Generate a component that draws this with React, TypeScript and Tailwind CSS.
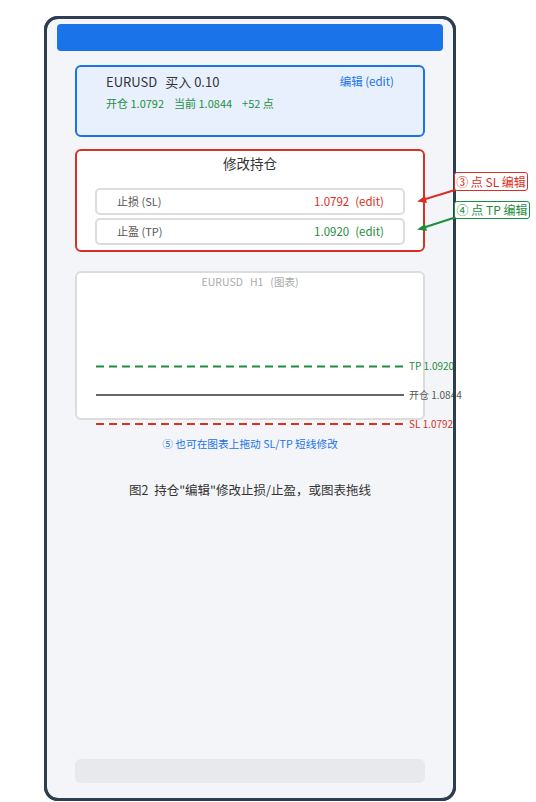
import React from "react";

const font = { fontFamily: '"Noto Sans CJK SC", "Noto Sans", sans-serif' };

export default function App() {
  return (
    <div className="relative w-[536px] h-[802px] bg-white overflow-hidden" style={font}>
      {/* phone frame */}
      <div className="relative ml-[44px] mt-[16px] w-[412px] h-[785px] rounded-[14px] border-[3px] border-[#2c3e50] bg-[#f4f5f9] flex flex-col">
        {/* top bar */}
        <div className="mx-[10px] mt-[5px] h-[27px] rounded-[4px] bg-[#1a73e8]" />

        {/* position card */}
        <div className="mx-[28px] mt-[14px] h-[72px] rounded-[6px] border-2 border-[#1a73e8] bg-[#e8f0fe] pl-[29px] pr-[29px] pt-[4px]">
          <div className="flex items-center justify-between h-[22px]">
            <div className="flex gap-[8px] text-[13px] text-[#333]">
              <span>EURUSD</span>
              <span>买入 0.10</span>
            </div>
            <span className="text-[11.5px] text-[#1a73e8]">编辑 (edit)</span>
          </div>
          <div className="flex gap-[10px] mt-[2px] text-[11px] text-[#1e8e3e]">
            <span>开仓 1.0792</span>
            <span>当前 1.0844</span>
            <span>+52 点</span>
          </div>
        </div>

        {/* modify card */}
        <div className="mx-[28px] mt-[12px] h-[103px] rounded-[6px] border-2 border-[#d93025] bg-white px-[18px]">
          <div className="text-center text-[13.5px] text-[#333] h-[24px] leading-[24px]">修改持仓</div>
          <div className="mt-[13px] flex flex-col gap-[3px]">
            <div className="h-[27px] rounded-[5px] border-2 border-[#dddddd] flex items-center justify-between pl-[20px] pr-[19px]">
              <span className="text-[11px] text-[#555]">止损 (SL)</span>
              <span className="flex gap-[6px] text-[11.5px] text-[#d93025]"><span>1.0792</span><span>(edit)</span></span>
            </div>
            <div className="h-[27px] rounded-[5px] border-2 border-[#dddddd] flex items-center justify-between pl-[20px] pr-[19px]">
              <span className="text-[11px] text-[#555]">止盈 (TP)</span>
              <span className="flex gap-[6px] text-[11.5px] text-[#1e8e3e]"><span>1.0920</span><span>(edit)</span></span>
            </div>
          </div>
        </div>

        {/* chart card */}
        <div className="mx-[28px] mt-[19px] h-[149px] rounded-[6px] border-2 border-[#dcdcdc] bg-white">
          <div className="flex justify-center gap-[7px] text-[10.5px] text-[#aaa] h-[18px] leading-[18px]">
            <span>EURUSD</span>
            <span>H1</span>
            <span>(图表)</span>
          </div>
        </div>

        <div className="mt-[16px] text-center text-[10.7px] text-[#1a73e8] h-[16px] leading-[16px]">⑤ 也可在图表上拖动 SL/TP 短线修改</div>

        <div className="mt-[29px] text-center text-[12.5px] text-[#333] h-[18px] leading-[18px] whitespace-pre">图2  持仓"编辑"修改止损/止盈，或图表拖线</div>

        {/* bottom bar */}
        <div className="mt-auto mb-[15px] mx-[28px] h-[24px] rounded-[6px] bg-[#e8e9ed]" />

        {/* chart lines drawing */}
        <svg className="absolute left-0 top-0 overflow-visible" width="406" height="420" style={{ pointerEvents: "none" }}>
          <line x1="49" y1="347.5" x2="357" y2="347.5" stroke="#1e8e3e" strokeWidth="2" strokeDasharray="8 5" />
          <text x="362" y="351" fontSize="10" fill="#1e8e3e" style={font}>TP 1.0920</text>
          <line x1="49" y1="376" x2="357" y2="376" stroke="#666" strokeWidth="2" />
          <text x="362" y="379.5" fontSize="10" fill="#555" style={font}>开仓 1.0844</text>
          <line x1="49" y1="405" x2="357" y2="405" stroke="#d93025" strokeWidth="2" strokeDasharray="8 5" />
          <text x="362" y="408.5" fontSize="10" fill="#d93025" style={font}>SL 1.0792</text>
        </svg>

        {/* frame border on top */}
        <div className="absolute -inset-[3px] rounded-[14px] border-[3px] border-[#2c3e50] pointer-events-none" />
      </div>

      {/* annotations */}
      <div className="absolute left-[454px] top-[172px] w-[74px] h-[19px] rounded-[3px] border-[1.5px] border-[#d93025] bg-white flex items-center justify-center text-[12px] text-[#d93025] whitespace-pre">③ 点 SL 编辑</div>
      <div className="absolute left-[454px] top-[201px] w-[76px] h-[18px] rounded-[3px] border-[1.5px] border-[#1e8e3e] bg-white flex items-center justify-center text-[12px] text-[#1e8e3e] whitespace-pre">④ 点 TP 编辑</div>

      <svg className="absolute left-0 top-0" width="536" height="802" style={{ pointerEvents: "none" }}>
        <line x1="455" y1="190" x2="424" y2="199.5" stroke="#d93025" strokeWidth="2" />
        <polygon points="417,201.5 425,196 427,203" fill="#d93025" />
        <line x1="455" y1="217.5" x2="424" y2="227.5" stroke="#1e8e3e" strokeWidth="2" />
        <polygon points="417,229.5 425,224 427,231" fill="#1e8e3e" />
      </svg>
    </div>
  );
}
